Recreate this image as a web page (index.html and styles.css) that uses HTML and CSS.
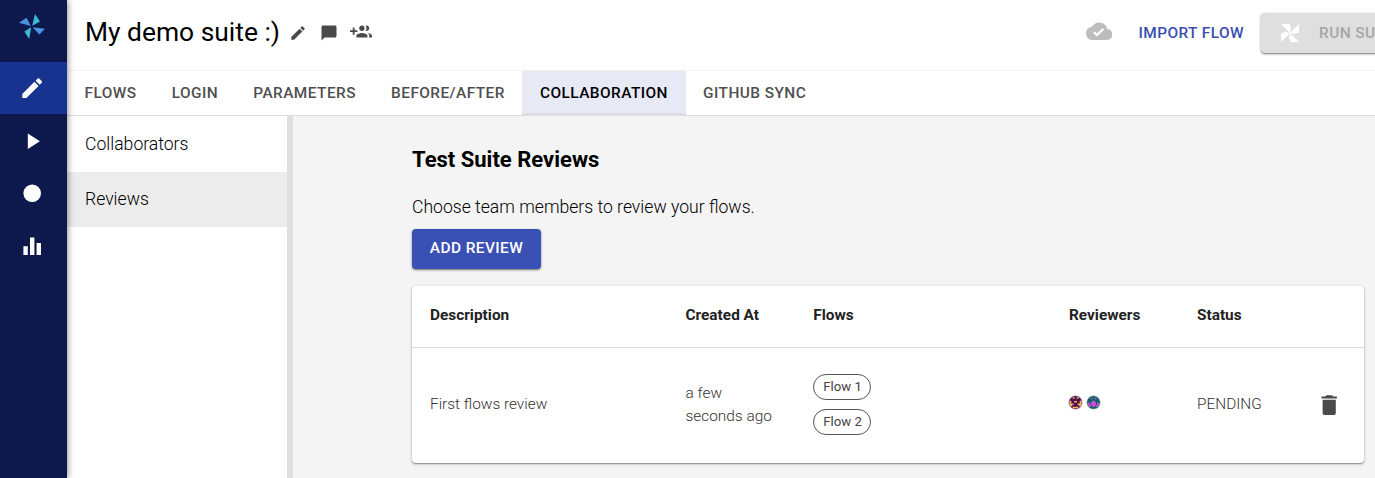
FILE: index.html
```html
<!DOCTYPE html>
<html lang="en">
<head>
<meta charset="utf-8">
<title>My demo suite</title>
<link rel="stylesheet" href="styles.css">
</head>
<body>
<div class="app">
  <nav class="rail">
    <a class="logo"><svg width="28" height="28" viewBox="0 0 28 28"><path fill="#3cbbd2" d="M14.200 12.800L17 1L22 8.400ZM13.200 14.200L11.200 26L6.400 18.400Z"/><path fill="#4c92e4" d="M12.800 13L1 9.800L8.600 4.800ZM14.600 14.200L27 15.800L21.400 21.400Z"/></svg></a>
    <a class="rail-item active"><svg class="icon" viewBox="0 0 24 24"><path d="M3 17.25V21h3.75L17.81 9.94l-3.75-3.75L3 17.25zM20.71 7.04c.39-.39.39-1.02 0-1.41l-2.34-2.34a.9959.9959 0 0 0-1.41 0l-1.83 1.83 3.75 3.75 1.83-1.83z"/></svg></a>
    <a class="rail-item"><svg class="icon" viewBox="0 0 24 24"><path d="M8 5v14l11-7z"/></svg></a>
    <a class="rail-item"><svg class="icon" viewBox="0 0 24 24"><circle cx="12" cy="12" r="8"/></svg></a>
    <a class="rail-item"><svg class="icon" viewBox="0 0 24 24"><path d="M10 20h4V4h-4v16zm-6 0h4v-8H4v8zM16 9v11h4V9h-4z"/></svg></a>
  </nav>
  <div class="main">
    <header class="header">
      <h1 class="title">My demo suite :)</h1>
      <div class="title-actions">
        <svg class="small-icon" viewBox="0 0 24 24"><path d="M3 17.25V21h3.75L17.81 9.94l-3.75-3.75L3 17.25zM20.71 7.04c.39-.39.39-1.02 0-1.41l-2.34-2.34a.9959.9959 0 0 0-1.41 0l-1.83 1.83 3.75 3.75 1.83-1.83z"/></svg>
        <svg class="small-icon chat" viewBox="0 0 24 24"><path d="M20 2H4c-1.1 0-2 .9-2 2v18l4-4h14c1.1 0 2-.9 2-2V4c0-1.1-.9-2-2-2z"/></svg>
        <svg class="people" viewBox="0 0 24 24"><path d="M8 10H5V7H3v3H0v2h3v3h2v-3h3v-2zm10 1c1.66 0 2.99-1.34 2.99-3S19.66 5 18 5c-.32 0-.63.05-.91.14.57.81.9 1.79.9 2.86s-.34 2.04-.9 2.86c.28.09.59.14.91.14zm-5 0c1.66 0 2.99-1.34 2.99-3S14.66 5 13 5s-3 1.34-3 3 1.34 3 3 3zm6.62 2.16c.83.73 1.38 1.66 1.38 2.84v2h3v-2c0-1.54-2.37-2.49-4.38-2.84zM13 13c-2 0-6 1-6 3v2h12v-2c0-2-4-3-6-3z"/></svg>
      </div>
      <div class="header-right">
        <svg class="cloud" viewBox="0 0 24 24"><path d="M19.35 10.04C18.67 6.59 15.64 4 12 4 9.11 4 6.6 5.64 5.35 8.04 2.34 8.36 0 10.91 0 14c0 3.31 2.69 6 6 6h13c2.76 0 5-2.24 5-5 0-2.64-2.05-4.78-4.65-4.96zM10 17l-3.5-3.5 1.41-1.41L10 14.17 15.18 9l1.41 1.41L10 17z"/></svg>
        <span class="import">Import flow</span>
        <button class="btn run"><svg class="pinwheel" viewBox="0 0 18 18"><path fill="#f0f0f0" d="M9 9L13 5L16 7.500ZM9 9L13 13L10.500 16ZM9 9L5 13L2 10.500ZM9 9L5 5L7.500 2Z"/><path fill="#fff" d="M0 0H8.500L10 4.500L9 9ZM18 0V8.500L13.500 10L9 9ZM18 18H9.500L8 13.500L9 9ZM0 18V9.500L4.500 8L9 9Z"/></svg><span>Run suite</span></button>
      </div>
    </header>
    <div class="tabs">
      <a class="tab">Flows</a><a class="tab">Login</a><a class="tab">Parameters</a><a class="tab">Before/After</a><a class="tab selected">Collaboration</a><a class="tab">GitHub Sync</a>
    </div>
    <div class="body">
      <aside class="side">
        <a class="side-item">Collaborators</a>
        <a class="side-item current">Reviews</a>
      </aside>
      <main class="content">
        <h2 class="heading">Test Suite Reviews</h2>
        <p class="lead">Choose team members to review your flows.</p>
        <button class="btn add">Add review</button>
        <section class="card">
          <div class="row head"><span>Description</span><span>Created At</span><span>Flows</span><span>Reviewers</span><span>Status</span><span></span></div>
          <div class="row data">
            <span class="cell">First flows review</span>
            <span class="created">a few seconds ago</span>
            <div class="chips"><span class="chip">Flow 1</span><span class="chip">Flow 2</span></div>
            <div class="avatars">
              <svg class="avatar" viewBox="0 0 16 16"><circle cx="8" cy="8" r="7.200" fill="#521052" stroke="#bcb4bf" stroke-width=".7"/><path fill="#f3b85a" d="M5 2.500h2v1.500H5zM9.300 2.500h2v1.500h-2zM1.500 6h2v3H6v1.500H4.500V12H2.500L1.500 9.500zM14.500 6h-2v3H10v1.500h1.500V12h2L14.500 9.500zM6.500 6.500h3V8h-3zM5 12.500h6V14H5z"/></svg>
              <svg class="avatar" viewBox="0 0 16 16"><circle cx="8" cy="8" r="7.200" fill="#07665f" stroke="#b2c2c1" stroke-width=".7"/><path fill="#cc48e0" d="M5 3h2v1.500H5zM9 3h2v1.500H9zM6.500 6h3v1.500h1.200v3.500h-1v1.500H6.300V11h-1V7.500h1.200zM2 8h2v2.500h1.200v2.200H3.500L1.800 10zM14 8h-2v2.500h-1.200v2.200h1.700L14.200 10z"/></svg>
            </div>
            <span class="cell">PENDING</span>
            <svg class="trash" viewBox="0 0 24 24"><path d="M6 19c0 1.100.900 2 2 2h8c1.100 0 2-.900 2-2V7H6v12zM19 4h-3.500l-1-1h-5l-1 1H5v2h14V4z"/></svg>
          </div>
        </section>
      </main>
    </div>
  </div>
</div>
</body>
</html>
```
FILE: styles.css
```css
* { box-sizing: border-box; }
body { margin: 0; font-family: Roboto, "Liberation Sans", sans-serif; color: #000; background: #fff; overflow: hidden; }
svg { display: block; flex: none; }
.app { display: flex; width: 1375px; height: 478px; overflow: hidden; }
.rail { flex: none; width: 67px; background: #0d194d; box-shadow: 0 0 7px rgba(0,0,0,.55); z-index: 2; }
.logo { display: flex; height: 62px; padding: 13px 0 0 18px; }
.rail-item { display: flex; align-items: center; height: 52.5px; padding: 1px 0 0 19px; }
.rail-item.active { background: #17328f; height: 52px; padding-top: 0; }
.icon { width: 26.4px; height: 26.4px; fill: #fff; }
.main { flex: 1; min-width: 0; display: flex; flex-direction: column; }
.header { flex: none; display: flex; align-items: center; height: 71px; padding: 0 0 5px 18px; border-bottom: 1px solid #f2f2f2; white-space: nowrap; overflow: hidden; }
.title { margin: 0; padding-bottom: 2px; font-size: 26.4px; line-height: 36px; font-weight: 400; }
.title-actions { display: flex; align-items: center; margin-left: 9px; fill: #4a4a4a; }
.small-icon { width: 18px; height: 18px; }
.chat { margin-left: 13px; }
.people { width: 22px; height: 22px; margin: 0 0 1px 12px; }
.header-right { display: flex; align-items: center; margin-left: auto; }
.cloud { width: 26.4px; height: 26.4px; margin-bottom: 2px; fill: #bdbdbd; }
.import { margin: 0 17px 0 26px; }
.import, .btn, .tab { font-size: 15.4px; font-weight: 500; letter-spacing: .44px; text-transform: uppercase; }
.import { color: #3a4db0; }
.btn { font-family: inherit; border: 0; border-radius: 4px; height: 40px; padding: 0 18px; box-shadow: 0 1px 3px rgba(0,0,0,.35), 0 1px 1px rgba(0,0,0,.25); }
.run { display: flex; align-items: center; gap: 20px; width: 145px; margin-right: -31px; padding-left: 20px; background: #dfdfdf; color: #a6a6a6; white-space: nowrap; }
.pinwheel { width: 18px; height: 18px; }
.tabs { flex: none; display: flex; height: 45px; border-bottom: 1px solid #dedede; }
.tab { padding: 0 17.6px; line-height: 44px; color: #4f4f4f; }
.tab.selected { background: #e7e9f5; color: #000; box-shadow: inset 0 -2px #dedfe3; }
.body { flex: 1; display: flex; min-height: 0; }
.side { flex: none; width: 226px; border-right: 6px solid #dfdfdf; font-size: 17.6px; font-weight: 300; }
.side-item { display: block; height: 56px; line-height: 56px; padding-left: 18px; }
.side-item.current { height: 55px; line-height: 54px; background: #ececec; }
.content { flex: 1; padding: 28px 11px 0 119px; background: #f4f4f4; }
.heading { margin: 0; font-size: 22px; line-height: 32px; font-weight: 700; }
.lead { margin: 18px 0 9px; font-size: 17.6px; line-height: 26px; font-weight: 300; }
.add { display: block; width: 129px; padding: 0 0 2px; background: #3a50b2; color: #fff; }
.card { margin-top: 17px; background: #fff; border-radius: 4px; height: 177px; box-shadow: 0 1px 3px rgba(0,0,0,.3), 0 1px 1px rgba(0,0,0,.25); }
.row { display: grid; grid-template-columns: 255.500px 127.700px 255.800px 128px 122px auto; padding-left: 18px; align-items: center; font-size: 15.4px; }
.head { height: 62px; padding-bottom: 4px; border-bottom: 1px solid #dedede; font-weight: 700; color: #222; }
.data { height: 115px; padding-bottom: 2px; font-weight: 300; color: #333; }
.cell { padding-bottom: 2px; }
.created { width: 90px; line-height: 23px; }
.chips { display: flex; flex-direction: column; align-items: flex-start; gap: 9px; }
.chip { width: 58px; height: 26px; padding-left: 9px; border: 1px solid #555; border-radius: 13px; font-size: 13.2px; line-height: 24px; font-weight: 400; color: #444; }
.avatars { display: flex; gap: 3px; margin: 0 0 5px -1px; }
.avatar { width: 15px; height: 15px; }
.trash { width: 26.4px; height: 26.4px; margin: 2px 0 0 -3px; fill: #4a4a4a; }
```
